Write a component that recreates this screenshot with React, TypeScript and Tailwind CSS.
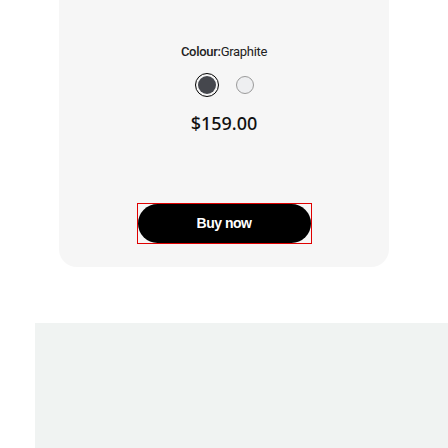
import React from 'react';

// Product colour picker card with a buy button
const swatches = [
  { name: 'Graphite', fill: 'bg-[#45474d]' },
  { name: 'Silver', fill: 'bg-[#eeeff1]' },
];

const App: React.FC = () => {
  const selected = 'Graphite';
  return (
    <div className="w-[448px] h-[448px] bg-white overflow-hidden font-['Roboto',sans-serif] flex flex-col">
      <div className="shrink-0 mx-auto w-[330px] bg-[#f6f6f6] rounded-b-[18px] pt-[44px] pb-[23px] flex flex-col items-center">
        <div className="text-[13px] leading-[16px] tracking-[-0.3px] text-[#222]">
          <span className="font-medium">Colour:</span>
          <span>{selected}</span>
        </div>
        <div className="mt-[13px] flex items-center gap-[17px] h-[24px]">
          {swatches.map((s) =>
            s.name === selected ? (
              <div key={s.name} className="w-[24px] h-[24px] rounded-full border border-black flex items-center justify-center">
                <div className={`w-[18px] h-[18px] rounded-full ${s.fill}`} />
              </div>
            ) : (
              <div key={s.name} className={`w-[18px] h-[18px] rounded-full border border-[#9a9a9a] ${s.fill}`} />
            )
          )}
        </div>
        <div className="mt-[14px] text-[18px] leading-[24px] font-medium text-[#111] font-['Noto_Sans',sans-serif]">$159.00</div>
        <div className="mt-[68px] w-[175px] h-[41px] border border-[#e00000]">
          <button className="w-full h-full rounded-full bg-black text-white text-[14px] font-bold tracking-[-0.5px] font-['Liberation_Sans',sans-serif]">
            Buy now
          </button>
        </div>
      </div>
      <div className="shrink-0 h-[56px]" />
      <div className="ml-[35px] h-[130px] shrink-0 bg-[#f0f3f2]" />
    </div>
  );
};

export default App;
